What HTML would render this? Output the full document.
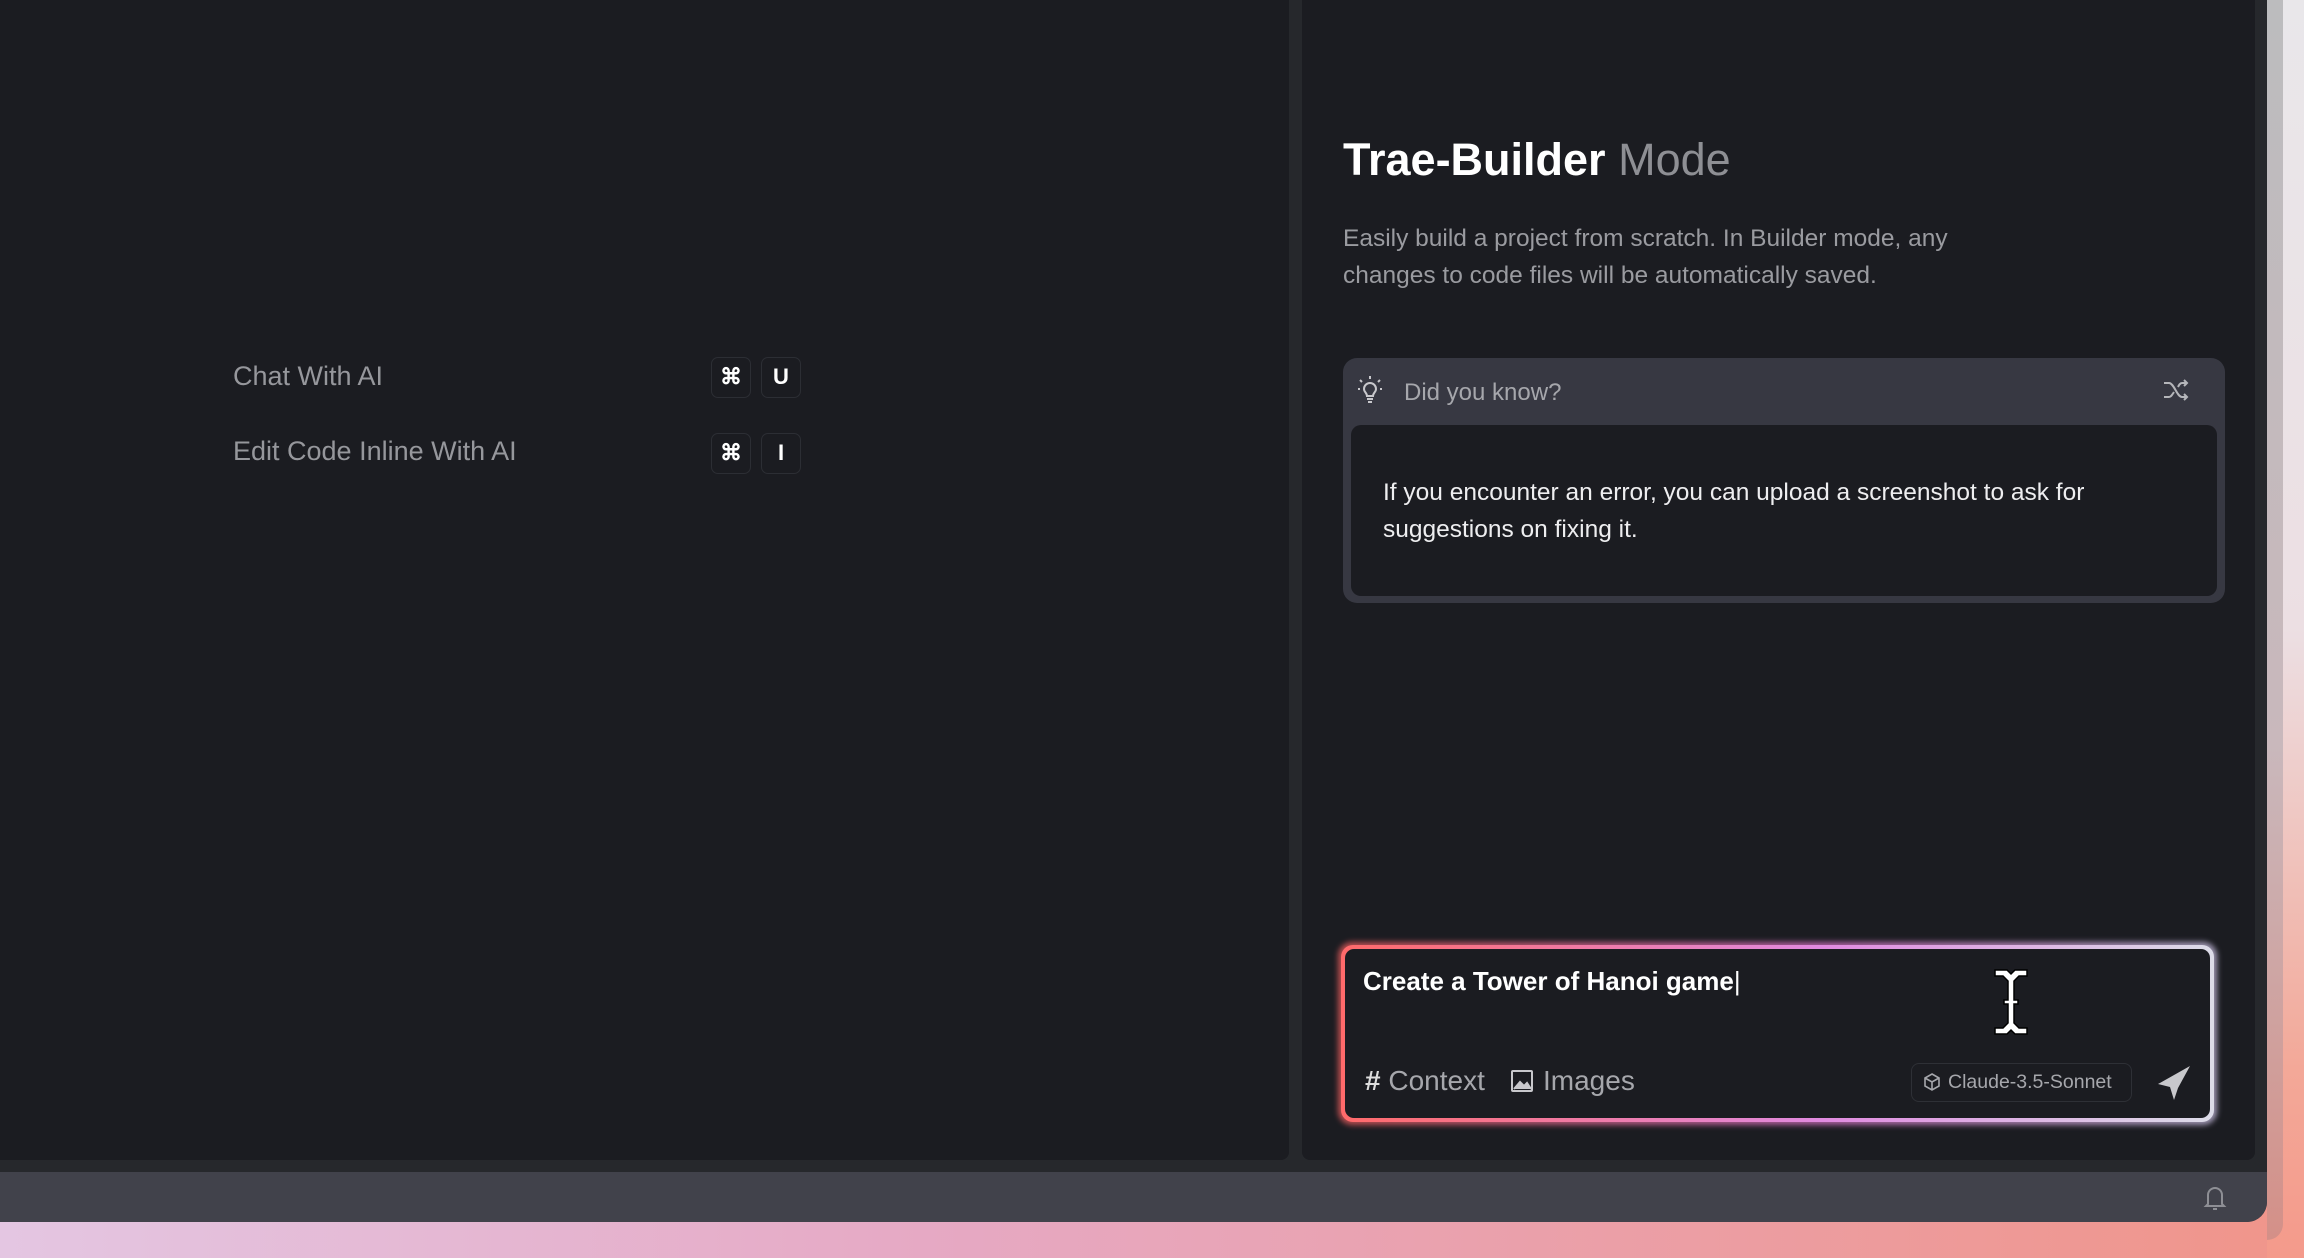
<!DOCTYPE html>
<html><head><style>
*{margin:0;padding:0;box-sizing:border-box}
body{width:2304px;height:1258px;overflow:hidden;position:relative;font-family:"Liberation Sans",sans-serif;background:linear-gradient(90deg,#e4c6e2 0%,#e6a9c4 40%,#f0958a 100%)}
.abs{position:absolute}
.keys{position:absolute;width:40px;height:41px;border:1.5px solid #2c2e34;border-radius:7px;color:#fff;font-weight:bold;font-size:22px;text-align:center;line-height:38px}
</style></head><body>
<div class="abs" style="left:2267px;top:0;width:37px;height:1258px;background:linear-gradient(180deg,#e9e7ea 0%,#ecdfe3 50%,#f3a898 85%,#f49a8b 100%)"></div>
<div class="abs" style="left:2267px;top:0;width:16px;height:1240px;background:linear-gradient(180deg,#bcbcbe 0%,#c9b8bc 60%,#d49088 100%);border-radius:0 0 22px 0"></div>
<div class="abs" style="left:0;top:0;width:2267px;height:1222px;background:#26282c;border-radius:0 0 20px 0"></div>
<div class="abs" style="left:0;top:1172px;width:2267px;height:50px;background:#41424b;border-radius:0 0 20px 0"></div>
<div class="abs" style="left:0;top:0;width:1289px;height:1160px;background:#1b1c21;border-radius:0 0 8px 0"></div>
<div class="abs" style="left:1302px;top:0;width:953px;height:1160px;background:#1b1c21;border-radius:0 0 8px 8px"></div>

<div class="abs" style="left:233px;top:361px;font-size:27px;color:#96979c">Chat With AI</div>
<div class="abs" style="left:233px;top:436px;font-size:27px;color:#96979c">Edit Code Inline With AI</div>
<div class="keys" style="left:711px;top:357px">⌘</div><div class="keys" style="left:761px;top:357px">U</div>
<div class="keys" style="left:711px;top:433px">⌘</div><div class="keys" style="left:761px;top:433px">I</div>

<div class="abs" style="left:1343px;top:134px;font-size:45px;font-weight:bold;color:#fff">Trae-Builder&nbsp;<span style="font-weight:normal;color:#8e8f94">Mode</span></div>
<div class="abs" style="left:1343px;top:220px;font-size:24.5px;line-height:37px;color:#9a9ba0;width:668px">Easily build a project from scratch. In Builder mode, any changes to code files will be automatically saved.</div>

<div class="abs" style="left:1343px;top:358px;width:882px;height:245px;background:#373842;border-radius:14px"></div>
<svg class="abs" style="left:1356px;top:374px" width="28" height="32" viewBox="0 0 28 32" fill="none" stroke="#c8c8cc" stroke-width="2"><path d="M8 15a6 6 0 1 1 12 0c0 3-3 4-3 7h-6c0-3-3-4-3-7zM11 25h6M12 28h4M14 2v3M4 6l2 2M24 6l-2 2M2 15h2M24 15h2"/></svg>
<div class="abs" style="left:1404px;top:379px;font-size:24px;color:#a6a7ac">Did you know?</div>
<svg class="abs" style="left:2162px;top:378px" width="28" height="24" viewBox="0 0 28 24" fill="none" stroke="#b5b6ba" stroke-width="2"><path d="M2 5h5c5 0 8 14 13 14h5M2 19h5c2 0 3-2 5-5M16 9c1-2 2-4 4-4h5M22 2l3 3-3 3M22 16l3 3-3 3"/></svg>
<div class="abs" style="left:1351px;top:425px;width:866px;height:171px;background:#1b1c21;border-radius:10px"></div>
<div class="abs" style="left:1383px;top:474px;font-size:24.5px;line-height:37px;color:#eeeef0;width:800px">If you encounter an error, you can upload a screenshot to ask for suggestions on fixing it.</div>

<div class="abs" style="left:1338px;top:942px;width:879px;height:183px;border-radius:14px;background:linear-gradient(90deg,#e05a5a,#d070c0 55%,#c0b8d8);filter:blur(3px);opacity:.8"></div>
<div class="abs" style="left:1341px;top:945px;width:873px;height:177px;border-radius:12px;background:linear-gradient(90deg,#ff6a6a,#e08ae0 55%,#dcdce8)"></div>
<div class="abs" style="left:1345px;top:949px;width:865px;height:169px;border-radius:9px;background:#1b1c21"></div>
<div class="abs" style="left:1363px;top:966px;font-size:26px;font-weight:bold;color:#fff">Create a Tower of Hanoi game<span style="font-weight:normal">|</span></div>
<svg class="abs" style="left:1993px;top:968px" width="36" height="68" viewBox="0 0 36 68" fill="#fff" stroke="#000" stroke-width="1.5"><path d="M2 2h12l4 4 4-4h12v6h-8l-5 5v19h4v4h-4v19l5 5h8v6H22l-4-4-4 4H2v-6h8l5-5V36h-4v-4h4V13l-5-5H2z"/></svg>
<div class="abs" style="left:1365px;top:1065px;font-size:28px;color:#a6a7ac"><b style="color:#ddd">#</b> Context</div>
<svg class="abs" style="left:1510px;top:1069px" width="24" height="24" viewBox="0 0 24 24" fill="none" stroke="#c8c8cc" stroke-width="2"><rect x="2" y="2" width="20" height="20" rx="1"/><path d="M4 20l6-7 4 4 3-3 4 6" fill="#c8c8cc"/></svg>
<div class="abs" style="left:1543px;top:1065px;font-size:28px;color:#a6a7ac">Images</div>
<div class="abs" style="left:1911px;top:1063px;width:221px;height:39px;border:1.5px solid #2e3036;border-radius:8px;font-size:19.5px;color:#a6a7ac;line-height:36px;padding-left:36px">Claude-3.5-Sonnet</div>
<svg class="abs" style="left:1922px;top:1072px" width="20" height="20" viewBox="0 0 20 20" fill="none" stroke="#a6a7ac" stroke-width="1.6"><path d="M10 2l7 4v8l-7 4-7-4V6zM3 6l7 4 7-4M10 10v8"/></svg>
<svg class="abs" style="left:2156px;top:1064px" width="36" height="38" viewBox="0 0 36 38" fill="#c8c8cc"><path d="M34 2L2 20l12 3 4 13 4-12z"/></svg>
<svg class="abs" style="left:2203px;top:1184px" width="24" height="28" viewBox="0 0 24 28" fill="none" stroke="#8e8f95" stroke-width="2"><path d="M5 20V11a7 7 0 0 1 14 0v9l2 2H3zM10 25h4"/></svg>
</body></html>
